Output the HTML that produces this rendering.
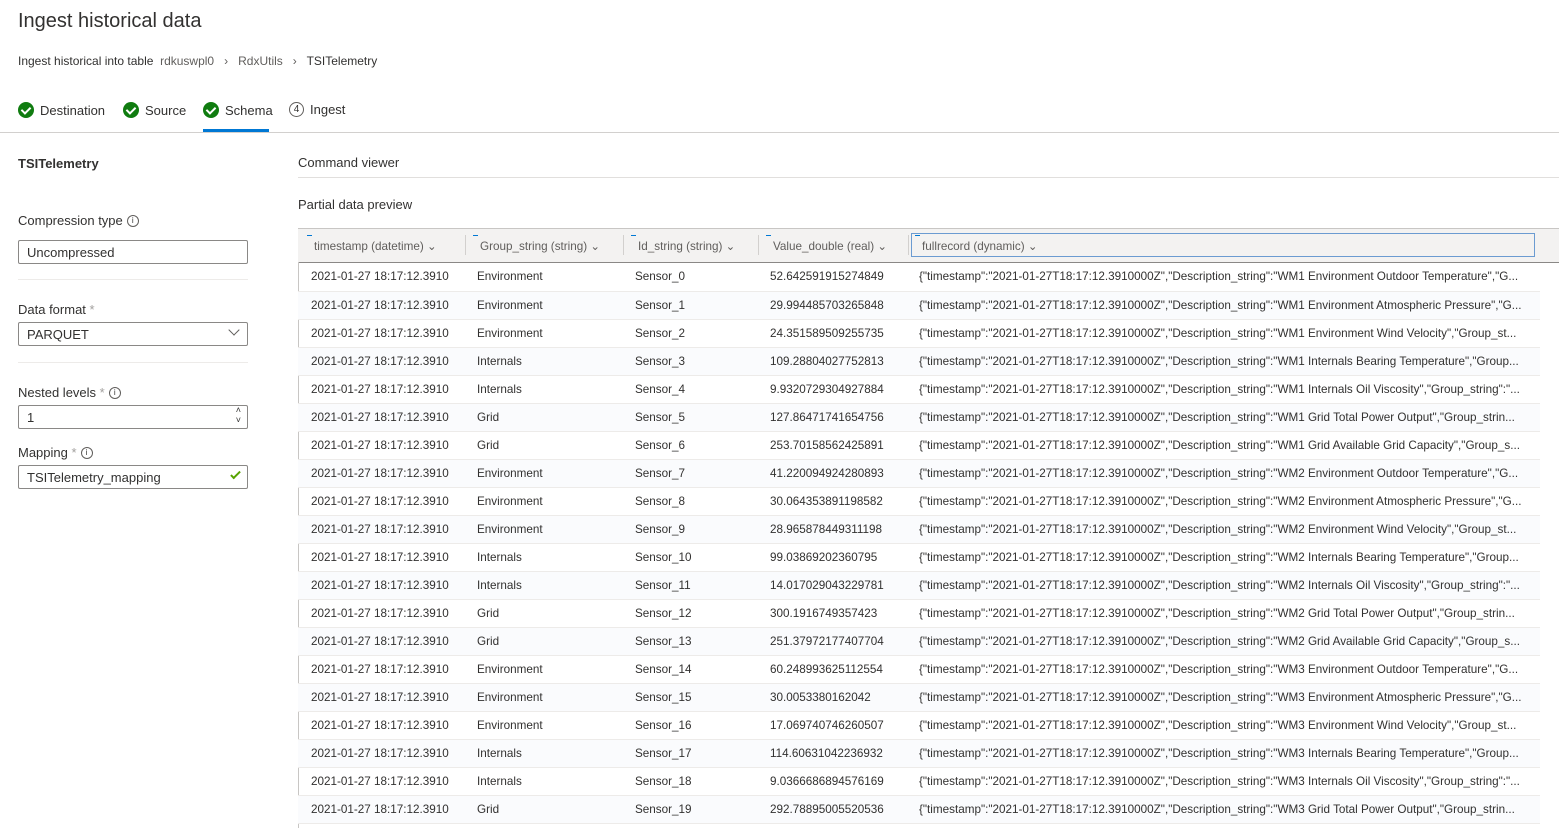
<!DOCTYPE html>
<html><head><meta charset="utf-8"><style>
*{box-sizing:border-box;margin:0;padding:0}
body{width:1559px;height:828px;overflow:hidden;background:#fff;font-family:"Liberation Sans",sans-serif;color:#323130;position:relative}
.a{position:absolute;white-space:nowrap}
h1{position:absolute;left:18px;top:10px;font-size:20px;font-weight:normal;color:#323130}
.crumb{left:18px;top:54px;font-size:12px}
.crumb .g{color:#605e5c}
.step{top:102px;font-size:13px;display:flex;align-items:center;gap:6px}
.ck{width:16px;height:16px;border-radius:50%;background:#107c10;display:inline-block;position:relative}
.ck:after{content:"";position:absolute;left:5px;top:3px;width:4px;height:7px;border:solid #fff;border-width:0 2px 2px 0;transform:rotate(45deg)}
.num{width:15px;height:15px;border-radius:50%;border:1px solid #605e5c;font-size:10px;display:inline-flex;align-items:center;justify-content:center}
.lbl{font-size:13px;left:18px}
.inp{position:absolute;left:18px;width:230px;height:24px;border:1px solid #8a8886;border-radius:2px;font-size:13px;padding:4px 8px}
.sep{position:absolute;left:18px;width:230px;height:1px;background:#edebe9}
.info{display:inline-block;width:12px;height:12px;border:1px solid #605e5c;border-radius:50%;font-size:8px;text-align:center;line-height:10px;vertical-align:2px;margin-left:4px}
table{position:absolute;left:298px;top:263px;border-collapse:collapse;font-size:11.7px;table-layout:fixed}
td{height:28px;white-space:nowrap;overflow:hidden;text-overflow:ellipsis;padding:0 0 0 13px;border-bottom:1px solid #edebe9}
tr:nth-child(even) td{background:#fafbfd}
.hd{position:absolute;left:298px;top:228px;width:1261px;height:35px;background:#f3f2f1;border-top:1px solid #c8c6c4;border-bottom:1px solid #8a8886}
.hc{position:absolute;top:10px;font-size:11.7px;color:#605e5c}
.hc:before{content:"";position:absolute;left:-7px;top:-4px;width:5px;height:1px;background:#0078d4}
.v{position:absolute;top:6px;width:1px;height:20px;background:#d2d0ce}
</style></head><body>
<h1>Ingest historical data</h1>
<div class="a crumb">Ingest historical into table &nbsp;<span class="g">rdkuswpl0 &nbsp;&nbsp;›&nbsp;&nbsp; RdxUtils &nbsp;&nbsp;›&nbsp;&nbsp;</span> <span style="color:#323130">TSITelemetry</span></div>
<div class="a step" style="left:18px"><span class="ck"></span>Destination</div>
<div class="a step" style="left:123px"><span class="ck"></span>Source</div>
<div class="a step" style="left:203px"><span class="ck"></span>Schema</div>
<div class="a step" style="left:289px"><span class="num">4</span>Ingest</div>
<div class="a" style="left:203px;top:129px;width:66px;height:3px;background:#0078d4"></div>
<div class="a" style="left:0;top:132px;width:1559px;height:1px;background:#d2d0ce"></div>
<div class="a" style="left:18px;top:156px;font-size:13px;font-weight:bold">TSITelemetry</div>
<div class="a lbl" style="top:213px">Compression type<span class="info">i</span></div>
<div class="inp" style="top:240px">Uncompressed</div>
<div class="sep" style="top:279px"></div>
<div class="a lbl" style="top:302px">Data format <span style="color:#a19f9d">*</span></div>
<div class="inp" style="top:322px">PARQUET<span style="position:absolute;right:9px;top:3px;width:8px;height:8px;border:solid #605e5c;border-width:0 1px 1px 0;transform:rotate(45deg)"></span></div>
<div class="sep" style="top:362px"></div>
<div class="a lbl" style="top:385px">Nested levels <span style="color:#a19f9d">*</span><span class="info">i</span></div>
<div class="inp" style="top:405px">1<span style="position:absolute;right:6px;top:-1px;font-size:9px;line-height:10px">˄<br>˅</span></div>
<div class="a lbl" style="top:445px">Mapping <span style="color:#a19f9d">*</span><span class="info">i</span></div>
<div class="inp" style="top:465px">TSITelemetry_mapping<span style="position:absolute;right:9px;top:3px;width:5px;height:10px;border:solid #57a300;border-width:0 2px 2px 0;transform:rotate(45deg)"></span></div>
<div class="a" style="left:298px;top:155px;font-size:13px">Command viewer</div>
<div class="a" style="left:298px;top:177px;width:1261px;height:1px;background:#e1dfdd"></div>
<div class="a" style="left:298px;top:197px;font-size:13px">Partial data preview</div>
<div class="hd">
<span class="hc" style="left:16px">timestamp (datetime) ⌄</span><span class="v" style="left:167px"></span>
<span class="hc" style="left:182px">Group_string (string) ⌄</span><span class="v" style="left:325px"></span>
<span class="hc" style="left:340px">Id_string (string) ⌄</span><span class="v" style="left:460px"></span>
<span class="hc" style="left:475px">Value_double (real) ⌄</span><span class="v" style="left:610px"></span>
<div style="position:absolute;left:613px;top:4px;width:624px;height:24px;border:1px solid #6b9bd1"></div>
<span class="hc" style="left:624px">fullrecord (dynamic) ⌄</span>
</div>
<div class="a" style="left:298px;top:262px;width:1px;height:566px;background:#c8c6c4"></div>
<table style="width:1242px">
<colgroup><col style="width:166px"><col style="width:158px"><col style="width:135px"><col style="width:149px"><col style="width:634px"></colgroup>
<tbody id="tb"></tbody></table>
<script>
var g=["Environment","Environment","Environment","Internals","Internals","Grid","Grid"];
var v=["52.642591915274849","29.994485703265848","24.351589509255735","109.28804027752813","9.9320729304927884","127.86471741654756","253.70158562425891","41.220094924280893","30.064353891198582","28.965878449311198","99.03869202360795","14.017029043229781","300.1916749357423","251.37972177407704","60.248993625112554","30.0053380162042","17.069740746260507","114.60631042236932","9.0366686894576169","292.78895005520536"];
var d=["Environment Outdoor Temperature\",\"G...","Environment Atmospheric Pressure\",\"G...","Environment Wind Velocity\",\"Group_st...","Internals Bearing Temperature\",\"Group...","Internals Oil Viscosity\",\"Group_string\":\"...","Grid Total Power Output\",\"Group_strin...","Grid Available Grid Capacity\",\"Group_s..."];
var h="";
for(var i=0;i<20;i++){var k=i%7,w=Math.floor(i/7)+1;
h+="<tr><td>2021-01-27 18:17:12.3910</td><td>"+g[k]+"</td><td>Sensor_"+i+"</td><td>"+v[i]+"</td><td>{\"timestamp\":\"2021-01-27T18:17:12.3910000Z\",\"Description_string\":\"WM"+w+" "+d[k]+"</td></tr>";}
document.getElementById("tb").innerHTML=h;
</script>
</body></html>
